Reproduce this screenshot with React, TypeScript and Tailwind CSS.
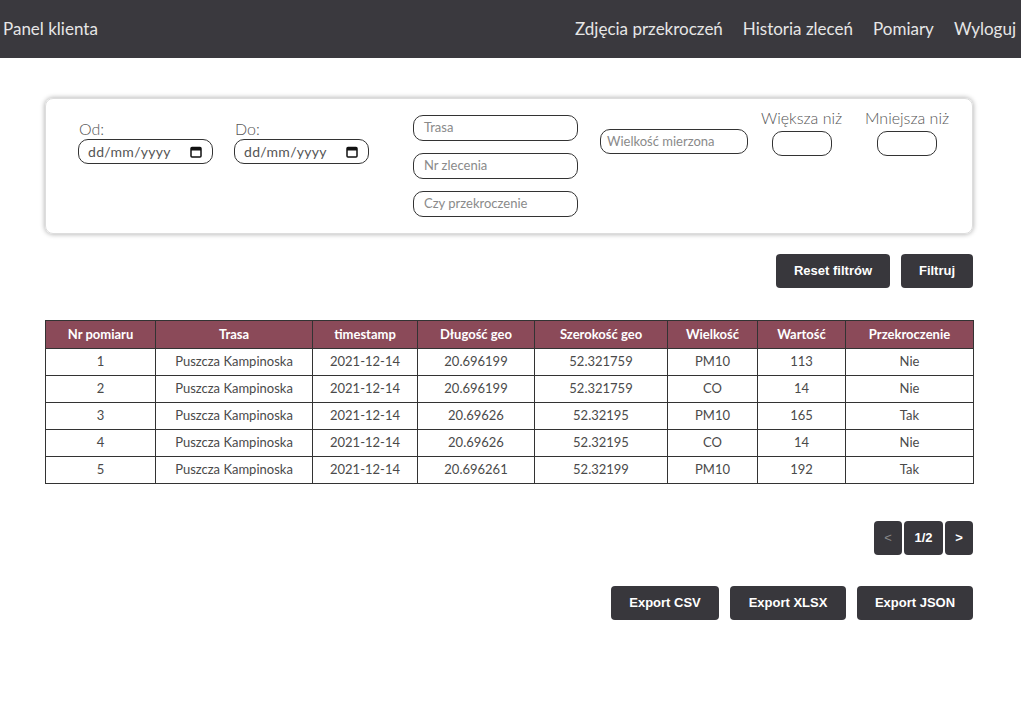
import React from "react";

const rows = [
  { nr: 1, trasa: "Puszcza Kampinoska", ts: "2021-12-14", lon: "20.696199", lat: "52.321759", w: "PM10", val: 113, p: "Nie" },
  { nr: 2, trasa: "Puszcza Kampinoska", ts: "2021-12-14", lon: "20.696199", lat: "52.321759", w: "CO", val: 14, p: "Nie" },
  { nr: 3, trasa: "Puszcza Kampinoska", ts: "2021-12-14", lon: "20.69626", lat: "52.32195", w: "PM10", val: 165, p: "Tak" },
  { nr: 4, trasa: "Puszcza Kampinoska", ts: "2021-12-14", lon: "20.69626", lat: "52.32195", w: "CO", val: 14, p: "Nie" },
  { nr: 5, trasa: "Puszcza Kampinoska", ts: "2021-12-14", lon: "20.696261", lat: "52.32199", w: "PM10", val: 192, p: "Tak" },
];

const headers = [
  { name: "Nr pomiaru", w: "w-[110px]" },
  { name: "Trasa", w: "w-[157px]" },
  { name: "timestamp", w: "w-[105px]" },
  { name: "Długość geo", w: "w-[117px]" },
  { name: "Szerokość geo", w: "w-[133px]" },
  { name: "Wielkość", w: "w-[90px]" },
  { name: "Wartość", w: "w-[88px]" },
  { name: "Przekroczenie", w: "w-[128px]" },
];

function CalendarIcon() {
  return (
    <svg width="12" height="12" viewBox="0 0 12 12" className="shrink-0">
      <rect x="1" y="1.5" width="10" height="9.5" rx="1" fill="none" stroke="#111" strokeWidth="1.5" />
      <rect x="1" y="1.5" width="10" height="3" fill="#111" />
    </svg>
  );
}

function DateField({ label }: { label: string }) {
  return (
    <div className="flex flex-col">
      <span className="h-[20px] text-[16px] leading-[20px] text-[#555] font-light pl-[1px]">{label}</span>
      <div className="w-[135px] h-[25px] border border-[#333] rounded-[10px] flex items-center justify-between pl-[9px] pr-[10px]">
        <span className="text-[14px] text-[#555] tracking-[0.3px]">dd/mm/yyyy</span>
        <CalendarIcon />
      </div>
    </div>
  );
}

function TextField({ placeholder, w }: { placeholder: string; w: string }) {
  return (
    <div className={`${w} h-[26px] border border-[#333] rounded-[10px] flex items-center px-[10px]`}>
      <span className="text-[13px] text-[#8a8a8a]">{placeholder}</span>
    </div>
  );
}

function DarkButton({ children, className }: { children: React.ReactNode; className?: string }) {
  return (
    <button
      className={`h-[34px] bg-[#38373c] text-white rounded-[4px] text-[13px] font-bold font-['Liberation_Sans',Arial,sans-serif] ${className ?? ""}`}
    >
      {children}
    </button>
  );
}

export default function App() {
  return (
    <div className="min-h-screen bg-white font-['Lato','Noto_Sans',sans-serif] text-[#333]">
      {/* Header */}
      <header className="h-[58px] bg-[#3a393e] flex items-center justify-between pl-[3px] pr-[5px]">
        <span className="text-[17px] text-[#e6e6e6]">Panel klienta</span>
        <nav className="flex gap-[20px] text-[17px] text-[#e6e6e6]">
          <a>Zdjęcia przekroczeń</a>
          <a>Historia zleceń</a>
          <a>Pomiary</a>
          <a>Wyloguj</a>
        </nav>
      </header>

      <main className="w-[928px] ml-[45px]">
        {/* Filters */}
        <div className="mt-[40px] h-[136px] rounded-[8px] border border-[#ddd] shadow-[0_0_4px_1px_rgba(0,0,0,0.25)] flex items-start pl-[32px] pt-[16px]">
          <div className="mt-[4px]">
            <DateField label="Od:" />
          </div>
          <div className="mt-[4px] ml-[21px]">
            <DateField label="Do:" />
          </div>
          <div className="ml-[44px] flex flex-col gap-[12px]">
            <TextField placeholder="Trasa" w="w-[165px]" />
            <TextField placeholder="Nr zlecenia" w="w-[165px]" />
            <TextField placeholder="Czy przekroczenie" w="w-[165px]" />
          </div>
          <div className="ml-[22px] mt-[14px]">
            <div className="w-[148px] h-[25px] border border-[#333] rounded-[10px] flex items-center px-[6px]">
              <span className="text-[13px] text-[#8a8a8a]">Wielkość mierzona</span>
            </div>
          </div>
          <div className="ml-[10px] -mt-[7px] flex flex-col items-center w-[87px]">
            <span className="text-[16px] leading-[20px] text-[#555] font-light">Większa niż</span>
            <div className="mt-[3px] w-[60px] h-[25px] border border-[#333] rounded-[10px]" />
          </div>
          <div className="ml-[16px] -mt-[7px] flex flex-col items-center w-[92px]">
            <span className="text-[16px] leading-[20px] text-[#555] font-light">Mniejsza niż</span>
            <div className="mt-[3px] w-[60px] h-[25px] border border-[#333] rounded-[10px]" />
          </div>
        </div>

        {/* Filter actions */}
        <div className="mt-[20px] flex justify-end gap-[11px]">
          <DarkButton className="w-[114px]">Reset filtrów</DarkButton>
          <DarkButton className="w-[72px]">Filtruj</DarkButton>
        </div>

        {/* Table */}
        <table className="mt-[32px] w-[928px] border-collapse table-fixed text-[13px]">
          <thead>
            <tr className="h-[28px] bg-[#8b4a59] text-white">
              {headers.map((h) => (
                <th key={h.name} className={`${h.w} border border-[#333] font-bold text-[13px]`}>
                  {h.name}
                </th>
              ))}
            </tr>
          </thead>
          <tbody className="text-[#4a4a4a]">
            {rows.map((r) => (
              <tr key={r.nr} className="h-[27px] text-center">
                <td className="border border-[#333]">{r.nr}</td>
                <td className="border border-[#333]">{r.trasa}</td>
                <td className="border border-[#333]">{r.ts}</td>
                <td className="border border-[#333]">{r.lon}</td>
                <td className="border border-[#333]">{r.lat}</td>
                <td className="border border-[#333]">{r.w}</td>
                <td className="border border-[#333]">{r.val}</td>
                <td className="border border-[#333]">{r.p}</td>
              </tr>
            ))}
          </tbody>
        </table>

        {/* Pagination */}
        <div className="mt-[37px] flex justify-end gap-[2px]">
          <DarkButton className="w-[28px] !font-normal !text-[#888]">&lt;</DarkButton>
          <DarkButton className="w-[39px]">1/2</DarkButton>
          <DarkButton className="w-[28px]">&gt;</DarkButton>
        </div>

        {/* Export */}
        <div className="mt-[31px] flex justify-end gap-[11px]">
          <DarkButton className="w-[108px]">Export CSV</DarkButton>
          <DarkButton className="w-[116px]">Export XLSX</DarkButton>
          <DarkButton className="w-[116px]">Export JSON</DarkButton>
        </div>
      </main>
    </div>
  );
}
